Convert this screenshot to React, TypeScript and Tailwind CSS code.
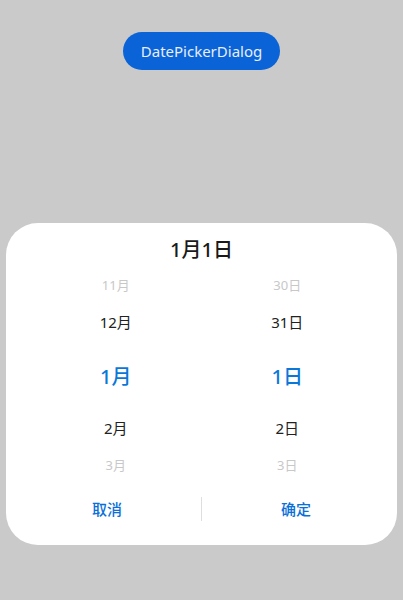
import React from "react";

const font = { fontFamily: '"Noto Sans", "Noto Sans CJK SC", sans-serif' };

export default function App() {
  const months = [
    { t: "11月", c: "text-[13px] text-[#c8c8c8] h-[36px]" },
    { t: "12月", c: "text-[15px] text-[#222] h-[36px]" },
    { t: "1月", c: "text-[20px] text-[#0a78d8] font-medium h-[70px] pt-[4px]" },
    { t: "2月", c: "text-[15px] text-[#222] h-[36px]" },
    { t: "3月", c: "text-[13px] text-[#c8c8c8] h-[36px] pt-[4px]" },
  ];
  const days = ["30日", "31日", "1日", "2日", "3日"];
  return (
    <div className="w-[403px] h-[600px] bg-[#cacaca] flex flex-col items-center" style={font}>
      <div className="mt-[32px] h-[38px] px-[18px] rounded-full bg-[#0a63d7] flex items-center justify-center text-[15px] text-[#e8eefa]">
        DatePickerDialog
      </div>
      <div className="mt-[153px] w-[391px] h-[322px] bg-white rounded-[32px] flex flex-col">
        <div className="h-[56px] pt-[12px] flex justify-center items-start text-[20px] text-[#1a1a1a] font-medium">
          1月1日
        </div>
        <div className="px-6 flex h-[209px]">
          {[months.map((m) => m), months.map((m, i) => ({ ...m, t: days[i] }))].map((col, ci) => (
            <div key={ci} className="flex-1 flex flex-col items-center -mt-[11px]">
              {col.map((m, i) => (
                <div key={i} className={`flex items-center justify-center ${m.c}`}>
                  {m.t}
                </div>
              ))}
            </div>
          ))}
        </div>
        <div className="px-4 flex items-center h-[42px]">
          <div className="flex-1 flex justify-center text-[15px] text-[#0a6fd8] font-medium mr-[9px]">取消</div>
          <div className="w-px h-[24px] bg-[#dedede]" />
          <div className="flex-1 flex justify-center text-[15px] text-[#0a6fd8] font-medium ml-[9px]">确定</div>
        </div>
      </div>
    </div>
  );
}
